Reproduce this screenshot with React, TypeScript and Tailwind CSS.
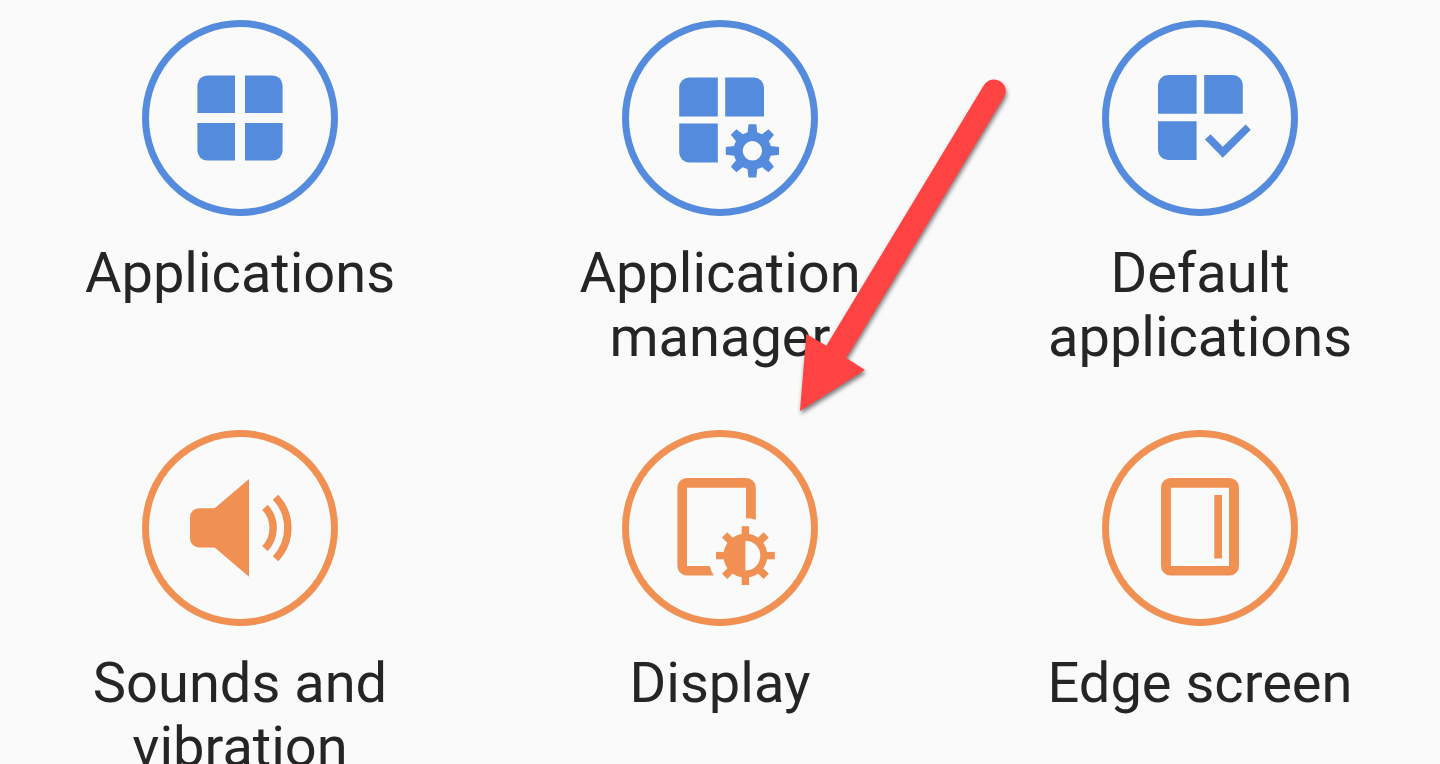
import type { ReactNode } from "react";

const GEAR_ANGLES = [0, 45, 90, 135, 180, 225, 270, 315];

function ApplicationsIcon() {
  return (
    <>
      <path d="M65.5 55.4H93V93H55.4V65.4a10 10 0 0 1 10-10z" />
      <path d="M103 55.4h27.6a10 10 0 0 1 10 10V93H103z" />
      <path d="M55.4 103H93v37.6H65.4a10 10 0 0 1-10-10z" />
      <path d="M103 103h37.6v27.6a10 10 0 0 1-10 10H103z" />
    </>
  );
}

function ManagerIcon() {
  return (
    <>
      <path d="M67.2 57.6h28.6v38.8H57.2V67.6a10 10 0 0 1 10-10z" />
      <path d="M103.2 57.6H132a10 10 0 0 1 10 10v28.8h-38.8z" />
      <path d="M57.2 103.6h38.6v38.8H67.2a10 10 0 0 1-10-10z" />
      <path
        fillRule="evenodd"
        d="M130.4 111.8a19 19 0 1 1 0 38a19 19 0 1 1 0-38zM130.4 121.1a9.7 9.7 0 1 0 0 19.4a9.7 9.7 0 1 0 0-19.4z"
      />
      {GEAR_ANGLES.map((angle) => (
        <path
          key={angle}
          d="M126.5 104.2h7.8l1.2 10.5h-10.2z"
          transform={`rotate(${angle} 130.4 130.8)`}
        />
      ))}
    </>
  );
}

function DefaultAppsIcon() {
  return (
    <>
      <path d="M66 55h28.6v38.8H56V65a10 10 0 0 1 10-10z" />
      <path d="M102.2 55h28.6a10 10 0 0 1 10 10v28.8h-38.6z" />
      <path d="M56 101.2h38.6V140H66a10 10 0 0 1-10-10z" />
      <path d="M103 119.6l5.5-5.3 12.3 12.4 22.8-22.1 5.2 5.2-28 28z" />
    </>
  );
}

function SoundIcon() {
  return (
    <>
      <path d="M57 78.2h15.7L107 49v97.8l-34.3-29.3H57a9 9 0 0 1-9-9V87.2a9 9 0 0 1 9-9z" />
      <g fill="none" stroke="currentColor" strokeWidth="7.4">
        <path d="M123 77.4a30 30 0 0 1 0 41.2" />
        <path d="M133.5 67.2a44.7 44.7 0 0 1 0 61.6" />
      </g>
    </>
  );
}

function DisplayIcon() {
  return (
    <>
      <path d="M64.9 48h59.4a9.5 9.5 0 0 1 9.5 9.5v32.2q-5-1.4-9.8-1.4V57.7H65V136h22.7q1.4 5.3 4 9.6H64.9a9.5 9.5 0 0 1-9.5-9.5V57.5a9.5 9.5 0 0 1 9.5-9.5z" />
      <path
        fillRule="evenodd"
        d="M123.4 103.6a22 22 0 1 1 0 44a22 22 0 1 1 0-44zM123.4 110.7v29.8a14.9 14.9 0 0 0 0-29.8z"
      />
      {GEAR_ANGLES.map((angle) => (
        <path
          key={angle}
          d="M119.7 96.2h7.4v10h-7.4z"
          transform={`rotate(${angle} 123.4 125.6)`}
        />
      ))}
    </>
  );
}

function EdgeScreenIcon() {
  return (
    <>
      <path
        fillRule="evenodd"
        d="M68.5 48h59a9.5 9.5 0 0 1 9.5 9.5v78.6a9.5 9.5 0 0 1-9.5 9.5h-59a9.5 9.5 0 0 1-9.5-9.5V57.5a9.5 9.5 0 0 1 9.5-9.5zM68.9 57.7V136H127V57.7z"
      />
      <path d="M112.3 65h7.7v63.5h-7.7z" />
    </>
  );
}

function Pointer() {
  return (
    <svg
      viewBox="0 0 750 1110"
      aria-hidden="true"
      className="pointer-events-none absolute top-10 left-1/2 z-10 ml-[60px] h-[370px] w-[250px] overflow-visible drop-shadow-[1px_3px_2px_rgba(0,0,0,0.5)]"
    >
      <path
        fill="#ff4343"
        d="M612 75A35 35 0 0 1 672 112L199 894L255 930L60 1053L79 822L139 857z"
      />
    </svg>
  );
}

type Setting = { label: string; color: string; icon: ReactNode; marked?: boolean };

const BLUE = "text-[#548bdd]";
const ORANGE = "text-[#f09153]";

const SETTINGS: Setting[] = [
  { label: "Applications", color: BLUE, icon: <ApplicationsIcon /> },
  { label: "Application manager", color: BLUE, icon: <ManagerIcon />, marked: true },
  { label: "Default applications", color: BLUE, icon: <DefaultAppsIcon /> },
  { label: "Sounds and vibration", color: ORANGE, icon: <SoundIcon /> },
  { label: "Display", color: ORANGE, icon: <DisplayIcon /> },
  { label: "Edge screen", color: ORANGE, icon: <EdgeScreenIcon /> },
];

export default function App() {
  return (
    <main className="h-screen overflow-hidden bg-[#fafafa] pt-5 font-['Roboto',sans-serif]">
      <ul className="grid grid-cols-3 gap-y-[61px]">
        {SETTINGS.map(({ label, color, icon, marked }) => (
          <li key={label} className="relative flex items-start justify-center">
            <button type="button" className="flex flex-col items-center gap-[25px]">
              <svg
                viewBox="0 0 196 196"
                fill="currentColor"
                aria-hidden="true"
                className={`size-[196px] shrink-0 ${color}`}
              >
                <circle cx="98" cy="98" r="94.5" fill="none" stroke="currentColor" strokeWidth="7" />
                {icon}
              </svg>
              <span className="max-w-[400px] text-[56px] leading-[64px] text-[#252525]">{label}</span>
            </button>
            {marked && <Pointer />}
          </li>
        ))}
      </ul>
    </main>
  );
}
